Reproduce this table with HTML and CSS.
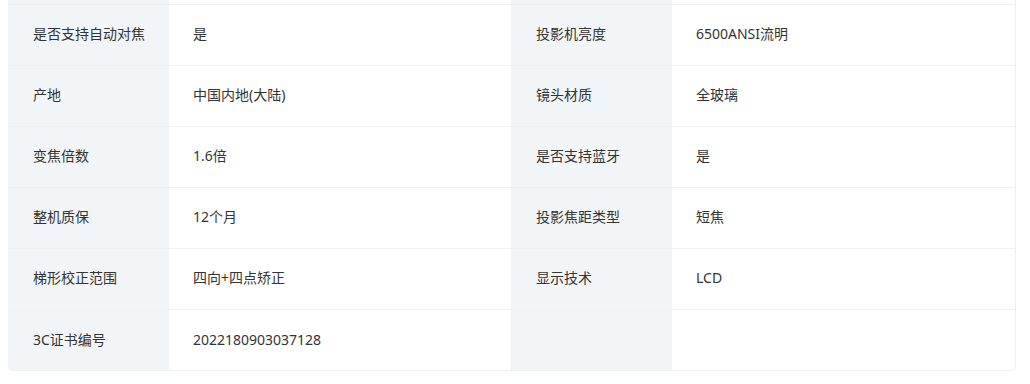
FILE: index.html
```html
<!DOCTYPE html>
<html lang="zh-CN">
<head>
<meta charset="utf-8">
<title>规格参数</title>
<link rel="stylesheet" href="styles.css">
</head>
<body>
<div class="spec-table">
  <div class="cell label stub"></div><div class="cell value stub"></div><div class="cell label stub"></div><div class="cell value stub"></div>

  <div class="cell label">是否支持自动对焦</div><div class="cell value">是</div>
  <div class="cell label">投影机亮度</div><div class="cell value">6500ANSI流明</div>

  <div class="cell label">产地</div><div class="cell value">中国内地(大陆)</div>
  <div class="cell label">镜头材质</div><div class="cell value">全玻璃</div>

  <div class="cell label">变焦倍数</div><div class="cell value">1.6倍</div>
  <div class="cell label">是否支持蓝牙</div><div class="cell value">是</div>

  <div class="cell label">整机质保</div><div class="cell value">12个月</div>
  <div class="cell label">投影焦距类型</div><div class="cell value">短焦</div>

  <div class="cell label">梯形校正范围</div><div class="cell value">四向+四点矫正</div>
  <div class="cell label">显示技术</div><div class="cell value">LCD</div>

  <div class="cell label last">3C证书编号</div><div class="cell value last">2022180903037128</div>
  <div class="cell label last empty"></div><div class="cell value last"></div>
</div>
</body>
</html>
```

FILE: styles.css
```css
html, body {
  margin: 0;
  padding: 0;
  background: #ffffff;
}

body {
  font-family: "Noto Sans", "Noto Sans CJK SC", "Liberation Sans", sans-serif;
  font-size: 14px;
  color: #333333;
}

.spec-table {
  display: grid;
  grid-template-columns: 161px 342px 161px 343px;
  width: 1008px;
  margin-left: 8px;
  border-right: 1px solid #edf0f3;
  border-radius: 0 0 4px 4px;
  overflow: hidden;
  box-sizing: border-box;
  border-bottom: 1px solid #edf0f3;
}

.cell {
  height: 61px;
  box-sizing: border-box;
  border-bottom: 1px solid #eef0f3;
  display: flex;
  align-items: center;
  padding-left: 25px;
  padding-bottom: 2px;
  line-height: 20px;
  white-space: nowrap;
}

.cell.stub {
  height: 5px;
  padding-bottom: 0;
}

.cell.last {
  height: 60px;
  border-bottom: none;
  padding-bottom: 1px;
}

.label {
  background: #f2f5f8;
  border-bottom-color: #edf1f5;
}

.value {
  background: #ffffff;
  padding-left: 24px;
}

.label.empty {
  border-left: 1px solid #eceef1;
}
```
